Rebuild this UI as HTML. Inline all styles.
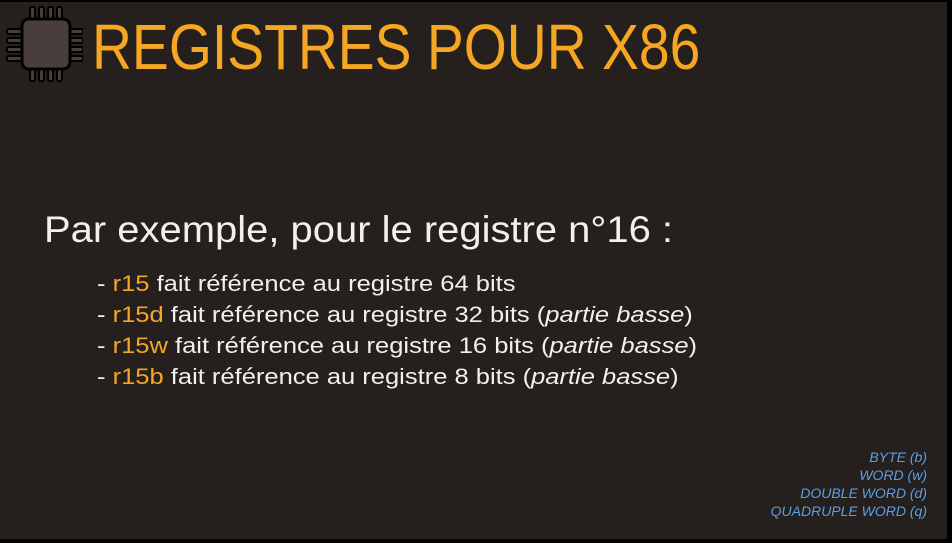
<!DOCTYPE html>
<html><head><meta charset="utf-8"><style>
html,body{margin:0;padding:0}
body{width:952px;height:543px;background:#000;position:relative;overflow:hidden;font-family:"Liberation Sans",sans-serif}
#bg{position:absolute;left:0;top:2px;width:947px;height:537px;background:#251f1e}
.t{position:absolute;white-space:nowrap;transform-origin:0 0}
#title{left:92px;top:10px;font-size:64px;color:#f5a623;transform:scaleX(0.864)}
#sub{left:44px;top:209px;font-size:37px;color:#f2f0ee;transform:scaleX(1.08)}
.li{left:97px;font-size:22px;color:#f2f0ee;transform:scaleX(1.16)}
.o{color:#f5a623}
.b{right:25px;font-size:14px;color:#5b9fe6;font-style:italic;text-align:right}
</style></head><body>
<div id="bg"></div>
<svg style="position:absolute;left:5px;top:5px" width="78" height="78" viewBox="0 0 78 78">
<g fill="#4a3e3c" stroke="#000" stroke-width="2">
<rect x="25" y="2" width="5" height="14" rx="2"/><rect x="34" y="2" width="5" height="14" rx="2"/><rect x="43" y="2" width="5" height="14" rx="2"/><rect x="52" y="2" width="5" height="14" rx="2"/>
<rect x="25" y="62" width="5" height="14" rx="2"/><rect x="34" y="62" width="5" height="14" rx="2"/><rect x="43" y="62" width="5" height="14" rx="2"/><rect x="52" y="62" width="5" height="14" rx="2"/>
<rect x="2" y="24" width="16" height="5" rx="2"/><rect x="2" y="33" width="16" height="5" rx="2"/><rect x="2" y="42" width="16" height="5" rx="2"/><rect x="2" y="51" width="16" height="5" rx="2"/>
<rect x="62" y="24" width="16" height="5" rx="2"/><rect x="62" y="33" width="16" height="5" rx="2"/><rect x="62" y="42" width="16" height="5" rx="2"/><rect x="62" y="51" width="16" height="5" rx="2"/>
<rect x="17" y="14" width="48" height="50" rx="7" stroke-width="3"/>
</g></svg>
<div class="t" id="title">REGISTRES POUR X86</div>
<div class="t" id="sub">Par exemple, pour le registre n°16 :</div>
<div class="t li" style="top:271px">- <span class="o">r15</span> fait référence au registre 64 bits</div>
<div class="t li" style="top:302px">- <span class="o">r15d</span> fait référence au registre 32 bits (<i>partie basse</i>)</div>
<div class="t li" style="top:333px">- <span class="o">r15w</span> fait référence au registre 16 bits (<i>partie basse</i>)</div>
<div class="t li" style="top:364px">- <span class="o">r15b</span> fait référence au registre 8 bits (<i>partie basse</i>)</div>
<div class="t b" style="top:449px">BYTE (b)</div>
<div class="t b" style="top:467px">WORD (w)</div>
<div class="t b" style="top:485px">DOUBLE WORD (d)</div>
<div class="t b" style="top:503px">QUADRUPLE WORD (q)</div>
</body></html>
